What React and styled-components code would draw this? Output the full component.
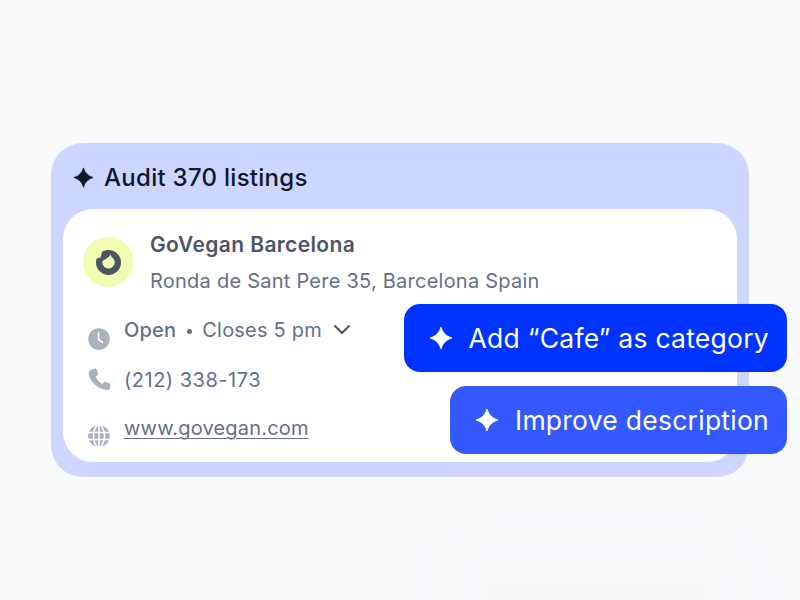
import React from "react";
import styled, { createGlobalStyle } from "styled-components";

const Global = createGlobalStyle`
  html, body { margin: 0; padding: 0; background: #f9fafc; }
  body { font-family: Inter, "Liberation Sans", sans-serif; }
`;

const Page = styled.div`
  position: relative;
  width: 800px;
  height: 600px;
  overflow: hidden;
  padding: 143px 51px 0;
  box-sizing: border-box;
  background: #f9fafc;
`;

const Glow = styled.div`
  position: absolute;
  left: 450px;
  top: 540px;
  width: 295px;
  height: 110px;
  border-radius: 24px;
  background: #f7f8fa;
  filter: blur(18px);
`;

const Panel = styled.section`
  position: relative;
  width: 698px;
  height: 334px;
  box-sizing: border-box;
  padding: 0 12px 15px;
  border-radius: 32px;
  background: #ccd6ff;
  display: flex;
  flex-direction: column;
`;

const PanelHeader = styled.header`
  height: 66px;
  flex: none;
  display: flex;
  align-items: center;
  gap: 10px;
  padding: 3px 0 0 10px;
  box-sizing: border-box;
  font-size: 24px;
  font-weight: 500;
  letter-spacing: 0.28px;
  color: #111827;
`;

const Card = styled.div`
  flex: 1;
  background: #fff;
  border-radius: 30px;
  padding: 20px 20px 0;
  display: flex;
  flex-direction: column;
`;

const Business = styled.div`
  display: flex;
  align-items: flex-start;
  gap: 17px;
`;

const LogoDisc = styled.div`
  width: 50px;
  height: 50px;
  margin-top: 8px;
  border-radius: 50%;
  background: #f2fcb0;
  display: flex;
  align-items: center;
  justify-content: center;
  flex: none;
`;

const Name = styled.div`
  font-size: 21px;
  line-height: 32px;
  font-weight: 600;
  letter-spacing: 0.38px;
  color: #4b5565;
`;

const Address = styled.div`
  font-size: 20px;
  line-height: 40px;
  letter-spacing: 0.24px;
  color: #667085;
`;

const Rows = styled.div`
  margin-top: 4px;
  display: flex;
  flex-direction: column;
`;

const Row = styled.div`
  display: flex;
  align-items: center;
  gap: 13px;
  height: ${(p) => p.$h}px;
  padding-left: 4px;
  font-size: 20px;
  letter-spacing: ${(p) => p.$spacing ?? 0.2}px;
  color: #667085;
`;

const IconSlot = styled.span`
  display: flex;
  flex: none;
  width: 24px;
  height: 24px;
  margin-top: ${(p) => p.$shift || 0}px;
`;

const Hours = styled.span`
  display: flex;
  align-items: center;
`;

const Status = styled.span`
  font-weight: 500;
`;

const Dot = styled.span`
  width: 5px;
  height: 5px;
  border-radius: 50%;
  background: #667085;
  margin: 2px 10px 0 11px;
`;

const Chevron = styled.svg`
  margin-left: 10px;
`;

const WebLink = styled.a`
  color: #667085;
  text-decoration: underline;
  text-underline-offset: 3px;
  text-decoration-thickness: 1px;
`;

const Suggestions = styled.div`
  position: absolute;
  right: -38px;
  top: 161px;
  display: flex;
  flex-direction: column;
  align-items: flex-end;
  gap: 14px;
`;

const Suggestion = styled.button`
  height: 68px;
  box-sizing: border-box;
  border: 0;
  border-radius: 16px;
  padding: 0 18px 0 25px;
  display: flex;
  align-items: center;
  gap: 16px;
  background: ${(p) => p.$bg};
  color: #fff;
  font-family: inherit;
  font-size: 26.500px;
  font-weight: 400;
  letter-spacing: 0.25px;
`;

const Sparkle = ({ size, color }) => (
  <svg width={size} height={size} viewBox="0 0 24 24" fill={color}>
    <path d="M12 1C13.800 6.800 17.200 10.200 23 12 17.200 13.800 13.800 17.200 12 23 10.200 17.200 6.800 13.800 1 12 6.800 10.200 10.200 6.800 12 1Z" stroke={color} strokeWidth="0.8" strokeLinejoin="round" />
  </svg>
);

const LogoMark = () => (
  <svg width="25" height="25" viewBox="0 0 25 25">
    <path
      fill="#4b5563"
      fillRule="evenodd"
      d="M12.500 0A12.500 12.500 0 1 1 0 12.500C0 11 .2 9.800.6 8.400L4.500 7.400C5.500 5 5.500 3 6.500 1.500 8.300.5 10.300 0 12.500 0ZM14.500 4.500 15.600 7A6.200 6.200 0 1 1 6.400 11.200C8 10 9.800 9 11.300 8 12.800 7.200 14 6 14.500 4.500Z"
    />
  </svg>
);

const ClockIcon = () => (
  <svg width="24" height="24" viewBox="0 0 24 24">
    <circle cx="12" cy="12" r="10.800" fill="#aab2bf" />
    <path d="M11.500 6v6.500l4 3" fill="none" stroke="#fff" strokeWidth="1.600" strokeLinecap="round" strokeLinejoin="round" />
  </svg>
);

const PhoneIcon = () => (
  <svg width="24" height="24" viewBox="0 0 24 24">
    <path
      fill="#aab2bf"
      d="M5.500 1.200 8 .6c.7-.1 1.300.2 1.600.9l1.500 4c.2.6 0 1.200-.4 1.600L8.800 8.700c.9 2.700 3.300 5.600 6.500 7.300l1.700-1.700c.5-.4 1.100-.5 1.600-.3l3.900 1.600c.7.300 1 .9.900 1.600l-.6 3.200c-.2 1-.9 1.700-1.900 1.600C10.800 21.600 2.400 13.200 1.600 5.200c-.1-1.800 1.700-3.500 3.900-4z"
    />
  </svg>
);

const GlobeIcon = () => (
  <svg width="24" height="24" viewBox="0 0 24 24">
    <circle cx="12" cy="12" r="10.800" fill="#aab2bf" />
    <g fill="none" stroke="#fff" strokeWidth="1.500">
      <path d="M1 8.500h22M1 15.500h22M12 1v22" />
      <ellipse cx="12" cy="12" rx="5.500" ry="11" />
    </g>
  </svg>
);

export default function App() {
  return (
    <Page>
      <Global />
      <Glow />
      <Panel>
        <PanelHeader>
          <Sparkle size={21} color="#111827" />
          Audit 370 listings
        </PanelHeader>
        <Card>
          <Business>
            <LogoDisc>
              <LogoMark />
            </LogoDisc>
            <div>
              <Name>GoVegan Barcelona</Name>
              <Address>Ronda de Sant Pere 35, Barcelona Spain</Address>
            </div>
          </Business>
          <Rows>
            <Row $h={50}>
              <IconSlot $shift={18}>
                <ClockIcon />
              </IconSlot>
              <Hours>
                <Status>Open</Status>
                <Dot />
                Closes 5 pm
                <Chevron width="20" height="20" viewBox="0 0 20 20" fill="none" stroke="#4b5563" strokeWidth="2" strokeLinecap="round" strokeLinejoin="round">
                  <path d="M3 6l7 7 7-7" />
                </Chevron>
              </Hours>
            </Row>
            <Row $h={50} $spacing={0.5}>
              <IconSlot>
                <PhoneIcon />
              </IconSlot>
              (212) 338-173
            </Row>
            <Row $h={46}>
              <IconSlot $shift={16}>
                <GlobeIcon />
              </IconSlot>
              <WebLink>www.govegan.com</WebLink>
            </Row>
          </Rows>
        </Card>
        <Suggestions>
          <Suggestion $bg="#0033ff">
            <Sparkle size={24} color="#fff" />
            Add “Cafe” as category
          </Suggestion>
          <Suggestion $bg="#3359ff">
            <Sparkle size={24} color="#fff" />
            Improve description
          </Suggestion>
        </Suggestions>
      </Panel>
    </Page>
  );
}
